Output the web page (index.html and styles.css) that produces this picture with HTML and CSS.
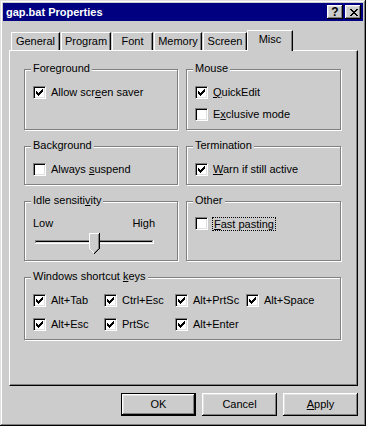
FILE: index.html
```html
<!DOCTYPE html>
<html lang="en">
<head>
  <meta charset="UTF-8">
  <title>gap.bat Properties</title>
  <link rel="stylesheet" href="styles.css">
</head>
<body>
  <div class="window">
    <div class="titlebar">
      <span class="title">gap.bat Properties</span>
      <div class="title-btns">
        <span class="tbtn help">?</span>
        <span class="tbtn close">
          <svg width="8" height="7" viewBox="0 0 8 7" shape-rendering="crispEdges"><path d="M0 0h2v1H0zM6 0h2v1H6zM1 1h2v1H1zM5 1h2v1H5zM2 2h4v1H2zM3 3h2v1H3zM2 4h4v1H2zM1 5h2v1H1zM5 5h2v1H5zM0 6h2v1H0zM6 6h2v1H6z"/></svg>
        </span>
      </div>
    </div>

    <div class="tabs">
      <div class="tab t-general">General</div>
      <div class="tab t-program">Program</div>
      <div class="tab t-font">Font</div>
      <div class="tab t-memory">Memory</div>
      <div class="tab t-screen">Screen</div>
      <div class="tab t-misc active">Misc</div>
    </div>

    <div class="panel">
      <div class="groups">
        <div class="group">
          <span class="legend">Foreground</span>
          <label class="check"><span class="box"><svg class="tick" width="7" height="7" viewBox="0 0 7 7" shape-rendering="crispEdges"><path d="M0 2h1v3H0zM1 3h1v3H1zM2 4h1v3H2zM3 3h1v3H3zM4 2h1v3H4zM5 1h1v3H5zM6 0h1v3H6z"/></svg></span><span>Allow scr<u>e</u>en saver</span></label>
        </div>

        <div class="group">
          <span class="legend">Mouse</span>
          <div class="stack">
            <label class="check"><span class="box"><svg class="tick" width="7" height="7" viewBox="0 0 7 7" shape-rendering="crispEdges"><path d="M0 2h1v3H0zM1 3h1v3H1zM2 4h1v3H2zM3 3h1v3H3zM4 2h1v3H4zM5 1h1v3H5zM6 0h1v3H6z"/></svg></span><span><u>Q</u>uickEdit</span></label>
            <label class="check"><span class="box"></span><span>E<u>x</u>clusive mode</span></label>
          </div>
        </div>

        <div class="group">
          <span class="legend">Background</span>
          <label class="check"><span class="box"></span><span>Always <u>s</u>uspend</span></label>
        </div>

        <div class="group">
          <span class="legend">Termination</span>
          <label class="check"><span class="box"><svg class="tick" width="7" height="7" viewBox="0 0 7 7" shape-rendering="crispEdges"><path d="M0 2h1v3H0zM1 3h1v3H1zM2 4h1v3H2zM3 3h1v3H3zM4 2h1v3H4zM5 1h1v3H5zM6 0h1v3H6z"/></svg></span><span><u>W</u>arn if still active</span></label>
        </div>

        <div class="group idle">
          <span class="legend">Idle sensiti<u>v</u>ity</span>
          <div class="range-labels"><span>Low</span><span>High</span></div>
          <svg class="slider" width="122" height="21" viewBox="0 0 122 21" shape-rendering="crispEdges">
            <rect x="2" y="7" width="118" height="1" fill="#808080"/>
            <rect x="2" y="7" width="1" height="3" fill="#808080"/>
            <rect x="3" y="8" width="116" height="1" fill="#000"/>
            <rect x="3" y="9" width="116" height="1" fill="#dfdfdf"/>
            <rect x="2" y="10" width="119" height="1" fill="#fff"/>
            <rect x="120" y="7" width="1" height="4" fill="#fff"/>
            <path d="M56 0h11v16l-5 5h-1l-5-5z" fill="#cccccc"/>
            <rect x="56" y="0" width="10" height="1" fill="#fff"/>
            <rect x="56" y="0" width="1" height="16" fill="#fff"/>
            <rect x="66" y="0" width="1" height="16" fill="#000"/>
            <rect x="65" y="1" width="1" height="15" fill="#808080"/>
            <path d="M57 16h1v1h-1zM58 17h1v1h-1zM59 18h1v1h-1zM60 19h1v1h-1z" fill="#fff"/>
            <path d="M65 16h1v1h-1zM64 17h1v1h-1zM63 18h1v1h-1zM62 19h1v1h-1zM61 20h1v1h-1z" fill="#000"/>
            <path d="M64 16h1v1h-1zM63 17h1v1h-1zM62 18h1v1h-1zM61 19h1v1h-1z" fill="#808080"/>
          </svg>
        </div>

        <div class="group other">
          <span class="legend">Other</span>
          <label class="check"><span class="box"></span><span class="focus"><u>F</u>ast pasting</span></label>
        </div>

        <div class="group wide">
          <span class="legend">Windows shortcut <u>k</u>eys</span>
          <div class="keys">
            <label class="check"><span class="box"><svg class="tick" width="7" height="7" viewBox="0 0 7 7" shape-rendering="crispEdges"><path d="M0 2h1v3H0zM1 3h1v3H1zM2 4h1v3H2zM3 3h1v3H3zM4 2h1v3H4zM5 1h1v3H5zM6 0h1v3H6z"/></svg></span><span>Alt+Tab</span></label>
            <label class="check"><span class="box"><svg class="tick" width="7" height="7" viewBox="0 0 7 7" shape-rendering="crispEdges"><path d="M0 2h1v3H0zM1 3h1v3H1zM2 4h1v3H2zM3 3h1v3H3zM4 2h1v3H4zM5 1h1v3H5zM6 0h1v3H6z"/></svg></span><span>Ctrl+Esc</span></label>
            <label class="check"><span class="box"><svg class="tick" width="7" height="7" viewBox="0 0 7 7" shape-rendering="crispEdges"><path d="M0 2h1v3H0zM1 3h1v3H1zM2 4h1v3H2zM3 3h1v3H3zM4 2h1v3H4zM5 1h1v3H5zM6 0h1v3H6z"/></svg></span><span>Alt+PrtSc</span></label>
            <label class="check"><span class="box"><svg class="tick" width="7" height="7" viewBox="0 0 7 7" shape-rendering="crispEdges"><path d="M0 2h1v3H0zM1 3h1v3H1zM2 4h1v3H2zM3 3h1v3H3zM4 2h1v3H4zM5 1h1v3H5zM6 0h1v3H6z"/></svg></span><span>Alt+Space</span></label>
            <label class="check"><span class="box"><svg class="tick" width="7" height="7" viewBox="0 0 7 7" shape-rendering="crispEdges"><path d="M0 2h1v3H0zM1 3h1v3H1zM2 4h1v3H2zM3 3h1v3H3zM4 2h1v3H4zM5 1h1v3H5zM6 0h1v3H6z"/></svg></span><span>Alt+Esc</span></label>
            <label class="check"><span class="box"><svg class="tick" width="7" height="7" viewBox="0 0 7 7" shape-rendering="crispEdges"><path d="M0 2h1v3H0zM1 3h1v3H1zM2 4h1v3H2zM3 3h1v3H3zM4 2h1v3H4zM5 1h1v3H5zM6 0h1v3H6z"/></svg></span><span>PrtSc</span></label>
            <label class="check"><span class="box"><svg class="tick" width="7" height="7" viewBox="0 0 7 7" shape-rendering="crispEdges"><path d="M0 2h1v3H0zM1 3h1v3H1zM2 4h1v3H2zM3 3h1v3H3zM4 2h1v3H4zM5 1h1v3H5zM6 0h1v3H6z"/></svg></span><span>Alt+Enter</span></label>
          </div>
        </div>
      </div>
    </div>

    <div class="buttons">
      <button class="btn default">OK</button>
      <button class="btn">Cancel</button>
      <button class="btn"><u>A</u>pply</button>
    </div>
  </div>
</body>
</html>
```

FILE: styles.css
```css
body {
  margin: 0;
  background: #cccccc;
  font-family: "Liberation Sans", Arial, sans-serif;
  font-size: 11px;
  line-height: 13px;
  color: #000;
}
.window {
  width: 366px;
  height: 426px;
  box-sizing: border-box;
  padding: 3px;
  background: #cccccc;
  box-shadow: inset -1px -1px #000, inset 1px 1px #dfdfdf, inset -2px -2px #808080, inset 2px 2px #fff;
}
.titlebar {
  display: flex;
  align-items: center;
  justify-content: space-between;
  height: 18px;
  padding: 0 2px 0 3px;
  background: #000080;
  color: #fff;
  font-weight: bold;
}
.title-btns {
  display: flex;
  gap: 2px;
}
.tbtn {
  display: flex;
  align-items: center;
  justify-content: center;
  width: 16px;
  height: 14px;
  box-sizing: border-box;
  background: #cccccc;
  color: #000;
  box-shadow: inset -1px -1px #000, inset 1px 1px #fff, inset -2px -2px #808080, inset 2px 2px #dfdfdf;
}
.tbtn.help {
  font-size: 12px;
  padding-top: 1px;
}
.tbtn svg {
  display: block;
  margin-left: 1px;
}

/* tab strip */
.tabs {
  display: flex;
  align-items: flex-end;
  height: 20px;
  margin-top: 9px;
  padding-left: 8px;
  position: relative;
  z-index: 1;
}
.tab {
  height: 18px;
  box-sizing: border-box;
  margin-left: 1px;
  padding-top: 2px;
  border-top: 1px solid #fff;
  border-left: 1px solid #fff;
  border-right: 1px solid #000;
  box-shadow: inset -1px 0 #808080;
  background: #cccccc;
  text-align: center;
}
.tab:first-child { margin-left: 0; }
.t-general { width: 49px; }
.t-program { width: 50px; }
.t-font { width: 41px; }
.t-memory { width: 48px; }
.t-screen { width: 44px; }
.t-misc { width: 46px; }
.tab.active {
  height: 21px;
  margin-left: 0;
  margin-bottom: -1px;
}

.panel {
  width: 349px;
  height: 336px;
  box-sizing: border-box;
  margin-left: 6px;
  padding: 18px 0 0 14px;
  border: 1px solid;
  border-color: #fff #000 #000 #fff;
  box-shadow: inset -1px -1px #808080;
}
.groups {
  display: grid;
  grid-template-columns: 154px 155px;
  grid-template-rows: 61px 39px 60px 63px;
  column-gap: 8px;
  row-gap: 16px;
}
.group {
  position: relative;
  border: 1px solid #808080;
  box-shadow: inset 1px 1px #fff, 1px 1px #fff;
  padding: 16px 0 0 8px;
}
.group.idle,
.group.other {
  padding-top: 15px;
}
.group.wide {
  grid-column: 1 / 3;
}
.legend {
  position: absolute;
  top: -8px;
  left: 6px;
  padding: 0 2px;
  background: #cccccc;
}

.stack {
  display: flex;
  flex-direction: column;
  gap: 9px;
}
.check {
  display: flex;
  align-items: center;
  gap: 5px;
  height: 13px;
  white-space: nowrap;
}
.box {
  flex: none;
  width: 13px;
  height: 13px;
  box-sizing: border-box;
  padding: 2px;
  border: 1px solid;
  border-color: #808080 #fff #fff #808080;
  background: #fff;
  box-shadow: inset 1px 1px #000, inset -1px -1px #dfdfdf;
}
.tick {
  display: block;
}
.focus {
  margin-left: -1px;
  padding: 0 1px;
  line-height: 12px;
  border: 1px dotted #000;
}

.range-labels {
  display: flex;
  justify-content: space-between;
  width: 122px;
}
.slider {
  display: block;
  margin-top: 3px;
}

.keys {
  display: grid;
  grid-template-columns: repeat(4, 71px);
  row-gap: 11px;
}

.buttons {
  display: flex;
  justify-content: flex-end;
  gap: 6px;
  width: 349px;
  margin: 7px 0 0 6px;
}
.btn {
  width: 75px;
  height: 23px;
  box-sizing: border-box;
  padding: 0;
  border: none;
  background: #cccccc;
  font: inherit;
  color: #000;
  box-shadow: inset -1px -1px #000, inset 1px 1px #fff, inset -2px -2px #808080, inset 2px 2px #dfdfdf;
}
.btn.default {
  border: 1px solid #000;
}
```
